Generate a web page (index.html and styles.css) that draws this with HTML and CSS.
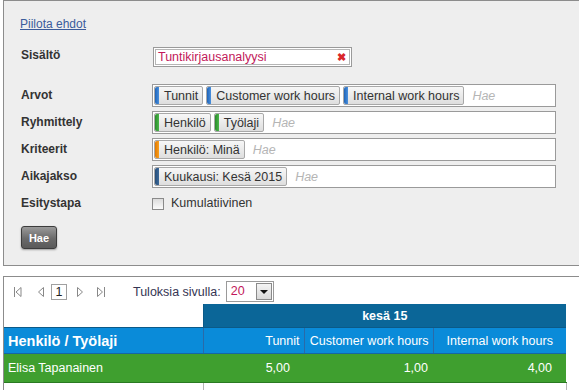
FILE: index.html
```html
<!DOCTYPE html>
<html>
<head>
    <title>Tuntikirjausanalyysi</title>
    <link rel="stylesheet" href="styles.css">
</head>
<body>
    <!-- Search conditions -->
    <div class="panel filters">
        <a href="#" class="toggle">Piilota ehdot</a>

        <div class="form">
            <div class="label first">Sisältö</div>
            <div class="field first">
                <div class="content-box">
                    <span class="content-value">Tuntikirjausanalyysi</span>
                    <span class="clear">&#10006;</span>
                </div>
            </div>

            <div class="label">Arvot</div>
            <div class="field">
                <div class="token-box">
                    <span class="token blue">Tunnit</span>
                    <span class="token blue">Customer work hours</span>
                    <span class="token blue">Internal work hours</span>
                    <span class="placeholder">Hae</span>
                </div>
            </div>

            <div class="label">Ryhmittely</div>
            <div class="field">
                <div class="token-box">
                    <span class="token green">Henkilö</span>
                    <span class="token green">Työlaji</span>
                    <span class="placeholder">Hae</span>
                </div>
            </div>

            <div class="label">Kriteerit</div>
            <div class="field">
                <div class="token-box">
                    <span class="token orange">Henkilö: Minä</span>
                    <span class="placeholder">Hae</span>
                </div>
            </div>

            <div class="label">Aikajakso</div>
            <div class="field">
                <div class="token-box">
                    <span class="token navy">Kuukausi: Kesä 2015</span>
                    <span class="placeholder">Hae</span>
                </div>
            </div>

            <div class="label">Esitystapa</div>
            <div class="field">
                <label class="check"><span class="checkbox"></span>Kumulatiivinen</label>
            </div>
        </div>

        <button class="search-btn">Hae</button>
    </div>

    <!-- Results -->
    <div class="panel results">
        <div class="pager">
            <span class="pg-icon">
                <svg width="8" height="10" viewBox="0 0 8 10"><rect x="0" y="0" width="1" height="10" fill="#888"/><path d="M7 0.5 L2 5 L7 9.5 Z" fill="#fff" stroke="#888"/></svg>
            </span>
            <span class="pg-icon prev">
                <svg width="6" height="10" viewBox="0 0 6 10"><path d="M5.5 0.5 L0.5 5 L5.5 9.5 Z" fill="#fff" stroke="#888"/></svg>
            </span>
            <span class="page-box">1</span>
            <span class="pg-icon next">
                <svg width="6" height="10" viewBox="0 0 6 10"><path d="M0.5 0.5 L5.5 5 L0.5 9.5 Z" fill="#fff" stroke="#888"/></svg>
            </span>
            <span class="pg-icon last">
                <svg width="8" height="10" viewBox="0 0 8 10"><path d="M0.5 0.5 L5.5 5 L0.5 9.5 Z" fill="#fff" stroke="#888"/><rect x="7" y="0" width="1" height="10" fill="#888"/></svg>
            </span>
            <span class="per-page">Tuloksia sivulla:</span>
            <span class="select">
                <span class="select-value">20</span>
                <span class="select-btn"><span class="arrow"></span></span>
            </span>
        </div>

        <table class="grid">
            <colgroup>
                <col style="width:199px">
                <col style="width:101px">
                <col style="width:129px">
                <col style="width:133px">
            </colgroup>
            <tr class="head-top">
                <th class="blank"></th>
                <th colspan="3">kesä 15</th>
            </tr>
            <tr class="head-cols">
                <th class="name">Henkilö / Työlaji</th>
                <th>Tunnit</th>
                <th>Customer work hours</th>
                <th class="center">Internal work hours</th>
            </tr>
            <tr class="row-total">
                <td class="name">Elisa Tapanainen</td>
                <td>5,00</td>
                <td class="tight">1,00</td>
                <td>4,00</td>
            </tr>
            <tr class="row-empty">
                <td></td>
                <td colspan="3"></td>
            </tr>
        </table>
    </div>
</body>
</html>
```

FILE: styles.css
```css
body {
    font-family: "Liberation Sans", Arial, sans-serif;
    font-size: 12px;
    color: #333;
    margin: 0;
    padding: 0;
    background-color: #fff;
    overflow: hidden;
}
.panel {
    margin-left: 3px;
    width: 620px;
    border: 1px solid #8c8c8c;
    border-right: none;
}
/* Filter panel */
.filters {
    background-color: #eeeeee;
    box-sizing: border-box;
    height: 266px;
    padding: 16px 0 0 16px;
}
.toggle {
    display: inline-block;
    color: #3b5c9b;
    text-decoration: underline;
    line-height: 14px;
}
.form {
    display: grid;
    grid-template-columns: 132px 404px;
    row-gap: 4px;
    margin-top: 16px;
}
.label {
    font-weight: bold;
    color: #333;
    line-height: 23px;
    padding-left: 1px;
}
.label.first {
    margin-bottom: 12px;
    line-height: 21px;
    position: relative;
    top: -2px;
}
.field.first {
    margin-bottom: 12px;
}
.content-box {
    display: flex;
    align-items: center;
    width: 199px;
    height: 20px;
    box-sizing: border-box;
    border: 1px solid #9a9a9a;
    padding: 1px;
    margin-left: 1px;
    background-color: #fff;
    box-shadow: inset 0 0 0 1px #fff, inset 0 0 0 2px #b5b5b5;
}
.content-value {
    color: #c2185b;
    padding-left: 3px;
    flex: 1;
    line-height: 16px;
    font-size: 12.5px;
}
.clear {
    color: #d9262a;
    font-size: 11px;
    font-weight: bold;
    margin-right: 4px;
}
.token-box {
    display: flex;
    align-items: center;
    gap: 3px;
    height: 23px;
    box-sizing: border-box;
    border: 1px solid #9a9a9a;
    background-color: #fff;
    padding: 0 1px;
}
.token {
    display: inline-block;
    height: 19px;
    line-height: 18px;
    box-sizing: border-box;
    padding: 0 4px 0 9px;
    border: 1px solid #a8a8a8;
    border-radius: 2px;
    background: linear-gradient(#f7f7f7, #dedede);
    color: #333;
    font-size: 12.5px;
    position: relative;
}
.token::before {
    content: "";
    position: absolute;
    left: 0;
    top: 0;
    bottom: 0;
    width: 4px;
    border-radius: 2px 0 0 2px;
}
.token.blue::before {
    background: linear-gradient(90deg, #1f64b8, #4a90dd);
}
.token.green::before {
    background: linear-gradient(90deg, #2a8a2a, #4cb84c);
}
.token.orange::before {
    background: linear-gradient(90deg, #e07800, #f8a020);
}
.token.navy::before {
    background: linear-gradient(90deg, #274d78, #3d6a9a);
}
.placeholder {
    color: #b5b5b5;
    font-style: italic;
    margin-left: 5px;
    font-size: 12.5px;
}
.check {
    display: flex;
    align-items: center;
    gap: 7px;
    line-height: 23px;
    font-size: 12.5px;
    padding-left: 0;
}
.checkbox {
    width: 10px;
    height: 10px;
    border: 1px solid #8a8a8a;
    background: linear-gradient(#dcdcdc, #fbfbfb);
}
.search-btn {
    margin-top: 11px;
    margin-left: 1px;
    width: 36px;
    height: 23px;
    border: 1px solid #3c3c3c;
    border-radius: 3px;
    background: linear-gradient(#9a9a9a, #6a6a6a 55%, #5a5a5a);
    color: #fff;
    font-family: "Liberation Sans", Arial, sans-serif;
    font-weight: bold;
    font-size: 11px;
    box-shadow: 0 1px 2px rgba(0,0,0,0.35);
    cursor: pointer;
    padding: 0;
}
/* Results panel */
.results {
    margin-top: 10px;
    height: 200px;
    background-color: #fff;
}
.pager {
    display: flex;
    align-items: center;
    height: 23px;
    padding: 3px 0 0 10px;
    color: #333;
}
.pg-icon {
    display: inline-flex;
    width: 8px;
    justify-content: center;
}
.pg-icon.prev {
    margin-left: 15px;
}
.page-box {
    width: 14px;
    height: 14px;
    border: 1px solid #a0a0a0;
    margin-left: 6px;
    text-align: center;
    line-height: 14px;
    color: #222;
    font-size: 12.5px;
}
.pg-icon.next {
    margin-left: 9px;
}
.pg-icon.last {
    margin-left: 13px;
}
.per-page {
    margin-left: 28px;
    color: #353553;
    font-size: 12.5px;
}
.select {
    display: flex;
    margin-left: 5px;
    width: 48px;
    height: 21px;
    box-sizing: border-box;
    border: 1px solid #9a9a9a;
    background-color: #fff;
}
.select-value {
    flex: 1;
    color: #c2185b;
    padding-left: 4px;
    line-height: 19px;
    font-size: 12.5px;
}
.select-btn {
    width: 14px;
    margin: 1px;
    border: 1px solid #8a8a8a;
    background: linear-gradient(#f4f4f4, #d8d8d8);
    display: flex;
    align-items: center;
    justify-content: center;
}
.arrow {
    width: 0;
    height: 0;
    border-left: 4px solid transparent;
    border-right: 4px solid transparent;
    border-top: 4px solid #111;
}
.grid {
    border-collapse: collapse;
    table-layout: fixed;
    width: 562px;
    margin-top: 1px;
}
.grid th, .grid td {
    padding: 0 4px;
    white-space: nowrap;
}
.head-top th {
    height: 23px;
    background-color: #0b6698;
    color: #fff;
    font-weight: bold;
    text-align: center;
    font-size: 12.5px;
}
.head-top th.blank {
    background-color: #fff;
    border-right: 1px solid #0b5a88;
}
.head-cols th {
    height: 25px;
    background-color: #0a8bd9;
    color: #fff;
    font-weight: normal;
    text-align: right;
    font-size: 12.5px;
    border-left: 1px solid #2a6aa8;
    border-bottom: 1px solid #1667a3;
    border-top: 1px solid #0b5a88;
}
.head-cols th.center {
    text-align: center;
}
.head-cols th.name {
    text-align: left;
    font-weight: bold;
    font-size: 14.5px;
    border-left: none;
}
.row-total td {
    height: 28px;
    background-color: #3f9f2f;
    color: #fff;
    text-align: right;
    font-size: 12.5px;
    border-bottom: 1px solid #2a7a22;
    padding-right: 14px;
}
.row-total td.tight {
    padding-right: 5px;
}
.row-total td.name {
    text-align: left;
    padding-left: 4px;
}
.row-empty td {
    height: 40px;
    border-right: 1px solid #b5b5b5;
}
```
